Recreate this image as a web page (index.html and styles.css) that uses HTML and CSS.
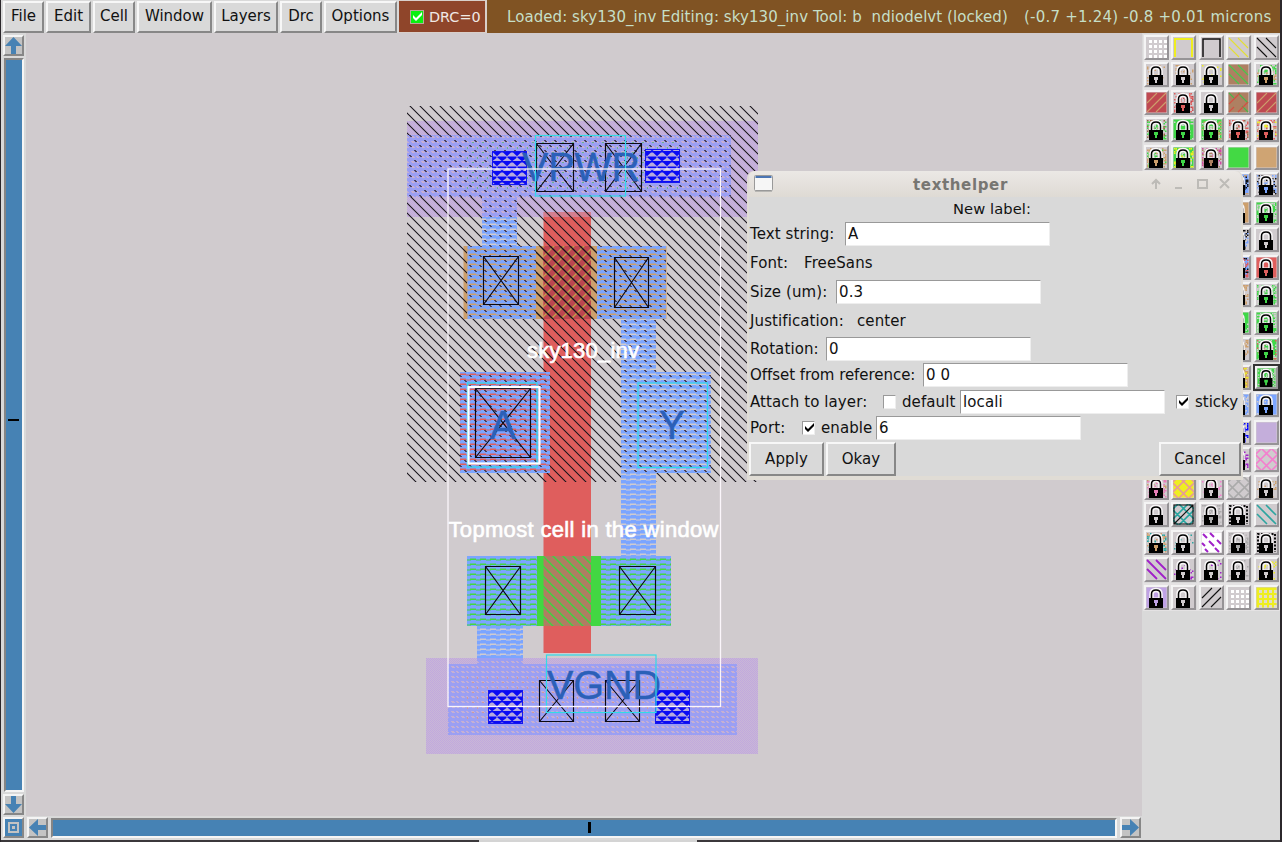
FILE: index.html
```html
<!DOCTYPE html>
<html lang="en">
<head>
<meta charset="utf-8">
<title>Magic layout: sky130_inv</title>
<link rel="stylesheet" href="styles.css">
</head>
<body>
<div class="app">
  <header class="menubar">
    <button class="menu m-file">File</button>
    <button class="menu m-edit">Edit</button>
    <button class="menu m-cell">Cell</button>
    <button class="menu m-window">Window</button>
    <button class="menu m-layers">Layers</button>
    <button class="menu m-drc">Drc</button>
    <button class="menu m-options">Options</button>
    <div class="drc"><svg class="drc-check" viewBox="0 0 14 14"><rect width="14" height="14" fill="#b9a89a"/><rect x="1" y="1" width="12" height="12" fill="#0af00f"/><path d="M3 5v3l3 3 6-6V2L6 8z" fill="#fff"/></svg><span>DRC=0</span></div>
    <div class="status"><span class="loaded">Loaded: sky130_inv Editing: sky130_inv Tool: b&nbsp; ndiodelvt (locked)</span><span class="coords">(-0.7 +1.24) -0.8 +0.01 microns</span></div>
  </header>
  <main class="main">
    <aside class="vscroll">
      <svg class="arrow" viewBox="0 0 17 17"><path d="M8.5 0L17 9h-6v8H6V9H0z"/></svg>
      <div class="vtrough"><i class="vtick"></i></div>
      <svg class="arrow" viewBox="0 0 17 17"><path d="M8.5 17L17 8h-6V0H6v8H0z"/></svg>
    </aside>
    <svg class="canvas" viewBox="26 33 1116 783" width="1116" height="783">
      <defs>
        <pattern id="well" width="10" height="10" patternUnits="userSpaceOnUse" patternTransform="translate(4 0)"><path d="M-2 -2L12 12M-2 8L2 12M8 -2L12 2" stroke="#17131a" stroke-width="1.05"/></pattern>
        <pattern id="locali" width="10" height="5" patternUnits="userSpaceOnUse" patternTransform="translate(1 1)"><path d="M0 0h10v2.6h-1v1h-4v-1H0zM0 4h5v1H0zM5 4.5h5v.5H5z" fill="#7ba5ff"/></pattern>
        <pattern id="railLi" width="10" height="5" patternUnits="userSpaceOnUse"><path d="M0 0h10v5H0z" fill="#9b9ff3"/><path d="M1 1h3v1H1zM2 2h3v1H2zM6 1h2v1H6zM7 2h2v1H7z" fill="#c6afd2"/></pattern>
        <pattern id="metal" width="2" height="2" patternUnits="userSpaceOnUse"><path d="M0 0h2v2H0z" fill="#c9b7d7"/><path d="M0 0h1v1H0zM1 1h1v1H1z" fill="#c1a9dd"/></pattern>
        <pattern id="dots" width="10" height="10" patternUnits="userSpaceOnUse" patternTransform="translate(4 0)"><path d="M0 0h2v1H0zM1 1h2v1H1zM5 5h2v1H5zM6 6h2v1H6z" fill="#4b4358"/></pattern>
        <pattern id="greenDots" width="10" height="10" patternUnits="userSpaceOnUse"><path d="M2 2h2v1H2zM7 7h1v2H7z" fill="#67b391"/></pattern>
        <pattern id="tanDots" width="10" height="10" patternUnits="userSpaceOnUse"><path d="M2 2h2v1H2zM7 7h1v2H7z" fill="#cf9a9c"/></pattern>
        <pattern id="ntrans" width="10" height="10" patternUnits="userSpaceOnUse" patternTransform="translate(7 0)"><rect width="10" height="10" fill="#b07d62"/><path d="M-2 -2L12 12M-2 8L2 12M8 -2L12 2" fill="none" stroke="#3fd240" stroke-width="1.400"/></pattern>
        <pattern id="ptrans" width="10" height="10" patternUnits="userSpaceOnUse"><rect width="10" height="10" fill="#bd4650"/><path d="M-2 12L12 -2M-2 2L2 -2M8 12L12 8" fill="none" stroke="#bda545" stroke-width="1.300"/></pattern>
        <pattern id="via" width="10" height="10" patternUnits="userSpaceOnUse" patternTransform="translate(2 1)"><path d="M0 0h10v1.500H9L5 5.300 1 1.500H0zM-5 5.500h9.500V7L0 10.300-4 7h-1zM5.500 5.500h9.500V7h-1l-4 3.300L6 7h-.5z" fill="#0a0af5"/></pattern>
      </defs>
      <rect x="26" y="33" width="1116" height="783" fill="#d0cbce"/>
      <!-- power and ground rails -->
      <rect x="407" y="121" width="351" height="96" fill="url(#metal)"/>
      <rect x="407" y="135" width="324" height="62" fill="url(#railLi)"/>
      <rect x="482" y="197" width="35" height="20" fill="url(#railLi)"/>
      <rect x="482" y="217" width="35" height="29" fill="url(#locali)"/>
      <rect x="477" y="626" width="46" height="33" fill="url(#locali)"/>
      <rect x="426" y="658" width="332" height="96" fill="url(#metal)"/>
      <rect x="477" y="658" width="46" height="6" fill="url(#railLi)"/>
      <rect x="448" y="664" width="289" height="71" fill="url(#railLi)"/>
      <rect x="467" y="677" width="216" height="45" fill="url(#tanDots)"/>
      <!-- diffusion and poly -->
      <rect x="463.500" y="246" width="203" height="73" fill="#cda06c"/>
      <rect x="543.500" y="212" width="47.500" height="441" fill="#df5e5d"/>
      <rect x="543.500" y="212" width="47.500" height="5" fill="url(#metal)" opacity=".4"/>
      <rect x="460" y="372" width="90" height="101" fill="#df5e5d"/>
      <rect x="543.500" y="246" width="47.500" height="73" fill="url(#ptrans)"/>
      <rect x="467" y="556" width="204" height="70" fill="#42d742"/>
      <rect x="543.500" y="556" width="47.500" height="70" fill="url(#ntrans)"/>
      <!-- local interconnect -->
      <rect x="467.500" y="246" width="68.500" height="73" fill="url(#locali)"/>
      <rect x="597" y="246" width="69" height="73" fill="url(#locali)"/>
      <rect x="621" y="319" width="35" height="54" fill="url(#locali)"/>
      <rect x="621" y="372" width="90" height="101" fill="url(#locali)"/>
      <rect x="460" y="372" width="90" height="101" fill="url(#locali)"/>
      <rect x="621" y="473" width="35" height="83" fill="url(#locali)"/>
      <rect x="467" y="556" width="70" height="70" fill="url(#locali)"/>
      <rect x="601" y="556" width="70" height="70" fill="url(#locali)"/>
      <!-- n-well hatch, thinned to dots where local interconnect crosses it -->
      <path fill="url(#well)" d="M407 106H758V482H656V473H711V372H656V319H667V246H597V319H621V482H550V372H460V473H550V482H407V197H482V246H467V319H536V246H517V197H731V135H407z"/>
      <path fill="url(#well)" d="M536 246h61v73h-61z"/>
      <path fill="url(#dots)" d="M407 135h324v62H517v49h19v73h-69v-73h15v-49h-75zM597 246h69v73h-10v53h55v101h-90V319h-24zM460 372h90v101h-90z"/>
      <rect x="467" y="142" width="212" height="50" fill="url(#greenDots)"/>
      <!-- vias -->
      <g fill="#b5a9dd">
        <rect x="492" y="151" width="35" height="34"/><rect x="645" y="149" width="35" height="34"/>
        <rect x="488" y="690" width="35" height="34"/><rect x="655" y="690" width="35" height="34"/>
      </g>
      <g fill="url(#via)" stroke="#1616ee">
        <rect x="492.500" y="151.500" width="34" height="33"/><rect x="645.500" y="149.500" width="34" height="33"/>
        <rect x="488.500" y="690.500" width="34" height="33"/><rect x="655.500" y="690.500" width="34" height="33"/>
      </g>
      <!-- contacts -->
      <path fill="none" stroke="#0b0914" stroke-width="1.150" d="M483.500 256.500h35v48h-35zl35 48m0-48l-35 48M614.500 257.500h34v50h-34zl34 50m0-50l-34 50M485.500 566.500h35v48h-35zl35 48m0-48l-35 48M619.500 566.500h36v48h-36zl36 48m0-48l-36 48M536.500 143.500h37v48h-37zl37 48m0-48l-37 48M605.500 143.500h36v48h-36zl36 48m0-48l-36 48M539.500 680.500h34v41h-34zl34 41m0-41l-34 41M605.500 680.500h34v41h-34zl34 41m0-41l-34 41M475.500 388.500h55v69h-55zl55 69m0-69l-55 69"/>
      <!-- net labels -->
      <g class="net">
        <text x="522" y="181" textLength="118" lengthAdjust="spacingAndGlyphs">VPWR</text>
        <text x="547" y="698.500" textLength="114" lengthAdjust="spacingAndGlyphs">VGND</text>
        <text x="490" y="438.500" textLength="26" lengthAdjust="spacingAndGlyphs">A</text>
        <text x="659" y="438.500" textLength="26" lengthAdjust="spacingAndGlyphs">Y</text>
      </g>
      <g fill="none" stroke="#31dbe7" stroke-width="1.200">
        <rect x="535.500" y="135.500" width="90" height="60.500"/><rect x="467.500" y="383" width="69.500" height="84"/>
        <rect x="638" y="383" width="69.500" height="84.500"/><rect x="546.500" y="655" width="109.500" height="57.500"/>
      </g>
      <rect x="448" y="169" width="272.500" height="537.500" fill="none" stroke="#fbf6fb" stroke-width="1.300"/>
      <rect x="468.500" y="387" width="71" height="76.500" fill="none" stroke="#fff" stroke-width="2.200"/>
      <g class="cellname">
        <text x="527" y="357.500" textLength="112">sky130_inv</text>
        <text x="448.500" y="537" textLength="270">Topmost cell in the window</text>
      </g>
    </svg>
    <div class="hscroll">
      <svg class="arrow" viewBox="0 0 17 17"><path fill-rule="evenodd" d="M0 0h17v17H0zM3 3v11h11V3zM5 5h7v7H5zM7 7v3h3V7z"/></svg>
      <svg class="arrow" viewBox="0 0 17 17"><path d="M0 8.500L9 0v6h8v5H9v6z"/></svg>
      <div class="htrough"><i class="htick"></i></div>
      <svg class="arrow" viewBox="0 0 17 17"><path d="M17 8.500L8 0v6H0v5h8v6z"/></svg>
    </div>
    <aside class="palette" id="palette"></aside>
  </main>
  <footer class="window-edge"><i></i></footer>

  <section class="dialog">
    <div class="titlebar">
      <svg class="app-icon" viewBox="0 0 20 18"><rect x="1" y="15" width="17" height="2" fill="#b7b6b3"/><rect x=".5" y=".5" width="18" height="15" rx="1" fill="#f6f6f6" stroke="#999"/><path d="M1.500 2h16" stroke="#4b75b3" stroke-width="2"/></svg>
      <strong>texthelper</strong>
      <svg class="win-controls" viewBox="0 0 80 12" fill="none" stroke="#bdbbb7" stroke-width="2"><path d="M6 11V2M2 6l4-4 4 4M25 10h7M48 2h9v8h-9zM70 1l9 9m0-9l-9 9"/></svg>
    </div>
    <div class="form">
      <div class="row r-new">New label:</div>
      <div class="row r-text"><label>Text string:</label><span class="entry e-text">A</span></div>
      <div class="row r-font"><label>Font:</label><span class="value v-font">FreeSans</span></div>
      <div class="row r-size"><label>Size (um):</label><span class="entry e-size">0.3</span></div>
      <div class="row r-just"><label>Justification:</label><span class="value v-just">center</span></div>
      <div class="row r-rot"><label>Rotation:</label><span class="entry e-rot">0</span></div>
      <div class="row r-offset"><label>Offset from reference:</label><span class="entry e-offset">0 0</span></div>
      <div class="row r-attach"><label>Attach to layer:</label><i class="box b-default"></i><span>default</span><span class="entry e-attach">locali</span><i class="box b-sticky"><svg viewBox="0 0 12 12"><path d="M2 4v3l3 3 6-6V1L5 7z"/></svg></i><span>sticky</span></div>
      <div class="row r-port"><label>Port:</label><i class="box b-enable"><svg viewBox="0 0 12 12"><path d="M2 4v3l3 3 6-6V1L5 7z"/></svg></i><span>enable</span><span class="entry e-port">6</span></div>
      <div class="row r-buttons"><button class="b-apply">Apply</button><button class="b-okay">Okay</button><button class="b-cancel">Cancel</button></div>
    </div>
  </section>
</div>
<script src="palette.js"></script>
</body>
</html>
```
FILE: styles.css
```css
* { box-sizing: border-box; }
body { margin: 0; background: #2b272b; overflow: hidden; font: 15px "DejaVu Sans", sans-serif; color: #111; }
button { font: inherit; color: inherit; letter-spacing: inherit; }
.app { position: relative; width: 1282px; height: 842px; padding: 0 2px 0 1px; display: flex; flex-direction: column; }

.menubar { height: 33px; display: flex; background: #d9d9d9; padding-left: 2px; }
.menu, .r-buttons button { flex: none; border: 2px solid; border-color: #f7f7f7 #878787 #878787 #f7f7f7; background: #d9d9d9; padding: 0 0 1px; white-space: nowrap; }
.menu { height: 32px; margin-right: 2px; margin-top: 1px; padding-bottom: 2px; }
.m-file { width: 41px; } .m-edit { width: 45px; } .m-cell { width: 42px; } .m-window { width: 75px; }
.m-layers { width: 64px; } .m-drc { width: 42px; } .m-options { width: 73px; }
.drc { width: 88px; flex: none; background: #8f452a; border: 1px solid #d9cfca; border-width: 1px 2px 1px 0; display: flex; align-items: center; padding-left: 11px; gap: 5px; color: #f0e9e5; font-size: 14.4px; }
.drc-check { width: 14px; height: 14px; }
.status { flex: 1; background: #805323; color: #c6dfc7; display: flex; align-items: center; padding-left: 20px; white-space: pre; }
.loaded { width: 517px; letter-spacing: .07px; }
.coords { letter-spacing: .22px; }

.main { height: 807px; display: grid; grid-template: 783px 24px / 25px 1116px 138px; background: #d9d9d9; }
.vscroll { display: flex; flex-direction: column; align-items: center; padding: 2px 1px 1px 1px; gap: 2px; }
.arrow { width: 21px; height: 21px; flex: none; border: 2px solid; border-color: #f4f4f4 #878787 #878787 #f4f4f4; background: #c3c3c3; fill: #4682b4; }
.vtrough { width: 20px; flex: 1; border: 2px solid; border-color: #858585 #f5f5f5 #f5f5f5 #858585; background: #4682b4; display: flex; align-items: center; justify-content: center; }
.vtick { width: 11px; height: 2px; background: #000; margin-top: -10px; }
.canvas { display: block; }
.hscroll { grid-column: 1 / 3; display: flex; padding: 1px 1px 2px 2px; gap: 3px; align-items: center; }
.htrough { flex: 1; height: 20px; border: 2px solid; border-color: #858585 #f5f5f5 #f5f5f5 #858585; background: #4682b4; display: flex; align-items: center; padding-left: 535px; }
.htick { width: 3px; height: 11px; background: #000; }
.palette { grid-column: 3; grid-row: 1 / 3; display: grid; grid-template-columns: repeat(5, 27.5px); grid-auto-rows: 27.5px; align-content: start; padding: .5px 0 0 .5px; }
.cell { border: 1px solid #e4e2e3; }
.cell svg { display: block; width: 25px; height: 25px; border: 2px solid; border-color: #f4f4f4 #969396 #969396 #f4f4f4; }
.cell.selected { border: 2px solid #333; }
.cell.selected svg { width: 23px; height: 23px; }
.window-edge { height: 2px; background: #3b383b; padding-left: 478px; }
.window-edge i { display: block; width: 218px; height: 2px; background: #d4d4d4; }

.net { font: 41px "Liberation Sans", Arial, sans-serif; fill: #2b60b8; stroke: #2b60b8; stroke-width: .5px; }
.cellname { font: 22px "Liberation Sans", Arial, sans-serif; fill: #fff; stroke: #fff; stroke-width: .6px; }

.dialog { position: absolute; left: 747px; top: 171px; width: 496px; height: 309px; background: #e0dcd5; border-radius: 7px 7px 0 0; padding: 0 2px 4px; letter-spacing: .1px; }
.titlebar { height: 26px; display: flex; align-items: center; background: linear-gradient(#ebe8e5, #dedad4); border-radius: 6px 6px 0 0; padding: 0 11px 0 5px; color: #777672; }
.app-icon { width: 20px; height: 18px; }
.titlebar strong { flex: 1; padding: 2px 3px 0 0; text-align: center; font-size: 15px; letter-spacing: .65px; }
.win-controls { width: 80px; height: 12px; }
.form { background: #d9d9d9; height: 279px; width: 492px; }
.row { display: flex; align-items: center; white-space: pre; padding-left: 1px; }
.r-new { height: 24px; justify-content: center; padding: 0 6px 1px 0; font-size: 14.67px; }
.r-text { height: 26px; } .r-font { height: 32px; } .r-size { height: 25px; } .r-just { height: 33px; }
.r-rot { height: 24px; } .r-offset { height: 28px; } .r-attach { height: 25px; } .r-port { height: 28px; }
.row label { flex: none; }
.r-text label { width: 95px; } .r-font label { width: 54px; } .r-size label { width: 86px; } .r-just label { width: 107px; }
.r-rot label { width: 76px; } .r-offset label { width: 173px; letter-spacing: -.05px; } .r-attach label { width: 133px; } .r-port label { width: 52px; }
.row .entry { width: 205px; height: 24px; flex: none; background: #fff; border: 1px solid; border-color: #999 #eee #eee #999; padding: 0 0 0 2px; line-height: 22px; }
.box { width: 13px; height: 14px; flex: none; background: #fff; border: 1px solid; border-color: #999 #eee #eee #999; margin-right: 6px; }
.box svg { display: block; width: 12px; height: 12px; }
.box + span { width: 58px; flex: none; }
.b-enable + span { width: 55px; }
.b-sticky { margin-left: 11px; }
.b-sticky + span { width: auto; letter-spacing: 0; }
.r-buttons { height: 34px; gap: 2px; padding: 0; }
.r-buttons button { height: 34px; }
.b-apply { width: 75px; } .b-okay { width: 70px; } .r-buttons .b-cancel { width: 82px; margin-left: auto; }
```
FILE: palette.js
```js
const G = '#d0cbce', GR = '#40d848', T = '#cda06c', R = '#df5e5d', B = '#7ba5ff', Y = '#eeee20', P = '#a020c8', K = '#111';
const lock = (bg, ...speckles) => ({ lock: true, bg, speckles });
const fill = (bg, draw = '') => ({ bg, draw });
const line = (d, c, w = 1.1) => `<path d="${d}" fill="none" stroke="${c}" stroke-width="${w}"/>`;
const back = (c, w) => line('M1 1l19 19M10 1l10 10M1 10l10 10', c, w);
const fwd = (c, w) => line('M1 20L20 1M1 11L11 1M10 20l10-10', c, w);
const cross = c => line('M0 5L5 0M0 15L15 0M6 21L21 6M16 21l5-5M0 6l15 15M0 16l5 5M6 0l15 15M16 0l5 5', c, 1.6);
const dots = c => {
  let s = '';
  for (let y = 3; y < 20; y += 5) for (let x = 3; x < 20; x += 5) s += `M${x} ${y}h3v3h-3z`;
  return `<path d="${s}" fill="${c}"/>`;
};

const rows = [
  [fill(G, dots('#fff')), fill(G, line('M2 20V2H19V20', Y, 2)), fill(G, line('M2 20V2H19V20', K, 1.5)), fill(G, back('#e3df35')), fill(G, back(K))],
  [lock(G, T), lock(G, T), lock(G, Y), fill('#ae8062', back('#45c84b')), { ...lock(G, GR, T, GR), key: T }],
  [fill('#bf4951', fwd('#cda06c')), lock(G, R, '#bf4951', R), lock(G), fill('#ae8062', line('M1 1l5 5M14 14l6 6M10 1l10 10', '#45b84b') + line('M1 12L12 1M10 20L20 10M1 20l5-5', '#d44e43')), fill('#bf4951', fwd('#cda06c'))],
  [lock(G, GR, '#956b45', GR), lock(GR, G), lock(GR, G, T), lock(G, R, '#956b45', R), lock(G, R, T, R, Y)],
  [lock(G, T, GR, T), lock(GR, Y, G), { ...lock(G, '#d04aa0', '#ae8062'), key: '#ae8062' }, fill('#43d944'), fill('#cfa473')],
  [lock(B), lock(B), lock(B), lock(B, K, T), lock(G, B, K, B)],
  [lock(T), lock(T), lock(T), lock(T), lock(GR, G, G)],
  [lock(B), lock(B), lock(B), lock(G, B, K, B), lock(G)],
  [lock(R), lock(R), lock(R), lock(B, R, K), lock(R)],
  [lock(T), lock(T), lock(T), lock(G, T, T), lock(G, GR, '#7edb83', GR)],
  [lock(GR), lock(GR), lock(GR), lock(GR, G), lock(GR, G, G)],
  [lock(T), lock(T), lock(T), lock(G, T, T, T), lock(GR, G, G, R)],
  [lock(T), lock(T), lock(T), lock(T, Y, G), lock(GR, G, G)],
  [lock(B), lock(B), lock(B), lock(B, G, G), lock(B, G)],
  [lock(G), lock(G), lock(G), lock(G, '#00f', '#00f'), fill('#c4aedb')],
  [lock(G), lock(G), lock(G), lock(G, P, P), fill(G, cross('#f47fce'))],
  [lock(G, '#e87eb8', T), fill(Y, cross('#e79a9a')), lock(G, '#f47fce'), fill(G, cross('#aaa')), lock(G, T)],
  [lock(G), fill(G, cross('#25a5a0') + line('M1 1h19v19H1zM1 20L20 1', K)), lock(G, '#aaa', '#bbb', '#aaa'), { ...lock(G), dotted: true }, fill(G, back('#2ca5a0', 1.6))],
  [lock(G, T, '#2ca5a0'), lock(G, '#2ca5a0'), fill('#fff', line('M2 2l4 4M9 1l4 4M1 11l3 3M8 9l5 5M16 8l4 4M14 16l4 4M4 17l3 3', P, 2)), lock(G, '#aaa', '#bbb', '#aaa'), { ...lock(G), dotted: true }],
  [fill(G, back(P, 1.8)), lock(G, P), lock(G, P), lock(G, '#aaa'), lock(G, Y)],
  [lock('#bfa2e5'), lock(G), fill(G, fwd(K)), fill(G, dots('#fff')), fill(Y, dots('#e2dcc8'))]
];

function speckle(colors, seed) {
  let s = '', n = seed * 7919 + 13;
  const density = colors.length > 1 ? 0.5 : 0.16;
  for (let y = 1; y < 20; y += 1.5) for (let x = 1; x < 20; x += 1.5) {
    n = (n * 1103515245 + 12345) % 2147483648;
    if (n / 2147483648 < density) s += `<rect x="${x}" y="${y}" width="1.5" height="1.5" fill="${colors[(n >> 8) % colors.length]}"/>`;
  }
  return s;
}

// Padlock: white halo, shackle, body, and a keyhole in the layer colour.
function padlock(key) {
  return `<path d="M5.500 11V7q0-4 4.500-4t4.500 4v4" fill="none" stroke="#f7f5f6" stroke-width="4.500"/>
    <path d="M3 10.500h14v1H3z" fill="#f7f5f6"/>
    <path d="M5.500 12V7q0-4 4.500-4t4.500 4v5" fill="none" stroke="#000" stroke-width="1.500"/>
    <path d="M3 11h14v10H3z" fill="#000"/><path d="M8 13h4v3h-1v3H9v-3H8z" fill="${key}"/>`;
}

document.getElementById('palette').innerHTML = rows.flatMap((row, r) => row.map((s, c) => {
  let art = s.draw || '';
  if (s.lock) {
    const key = s.key || (s.bg === G && s.speckles.length > 1 ? s.speckles[0] : s.bg);
    if (s.speckles.length) art += speckle(s.speckles, r * 5 + c + 1);
    if (s.dotted) art += '<path d="M2 20V2H19V20" fill="none" stroke="#111" stroke-width="2" stroke-dasharray="2 1.500"/>';
    art += padlock(key);
  }
  const inner = `<rect x=".500" y=".500" width="20" height="20" fill="${s.bg}"/>${art}`;
  return `<div class="cell${r === 12 && c === 4 ? ' selected' : ''}"><svg viewBox="0 0 21 21"><rect width="21" height="21" fill="${G}"/>${inner}</svg></div>`;
})).join('');
```
